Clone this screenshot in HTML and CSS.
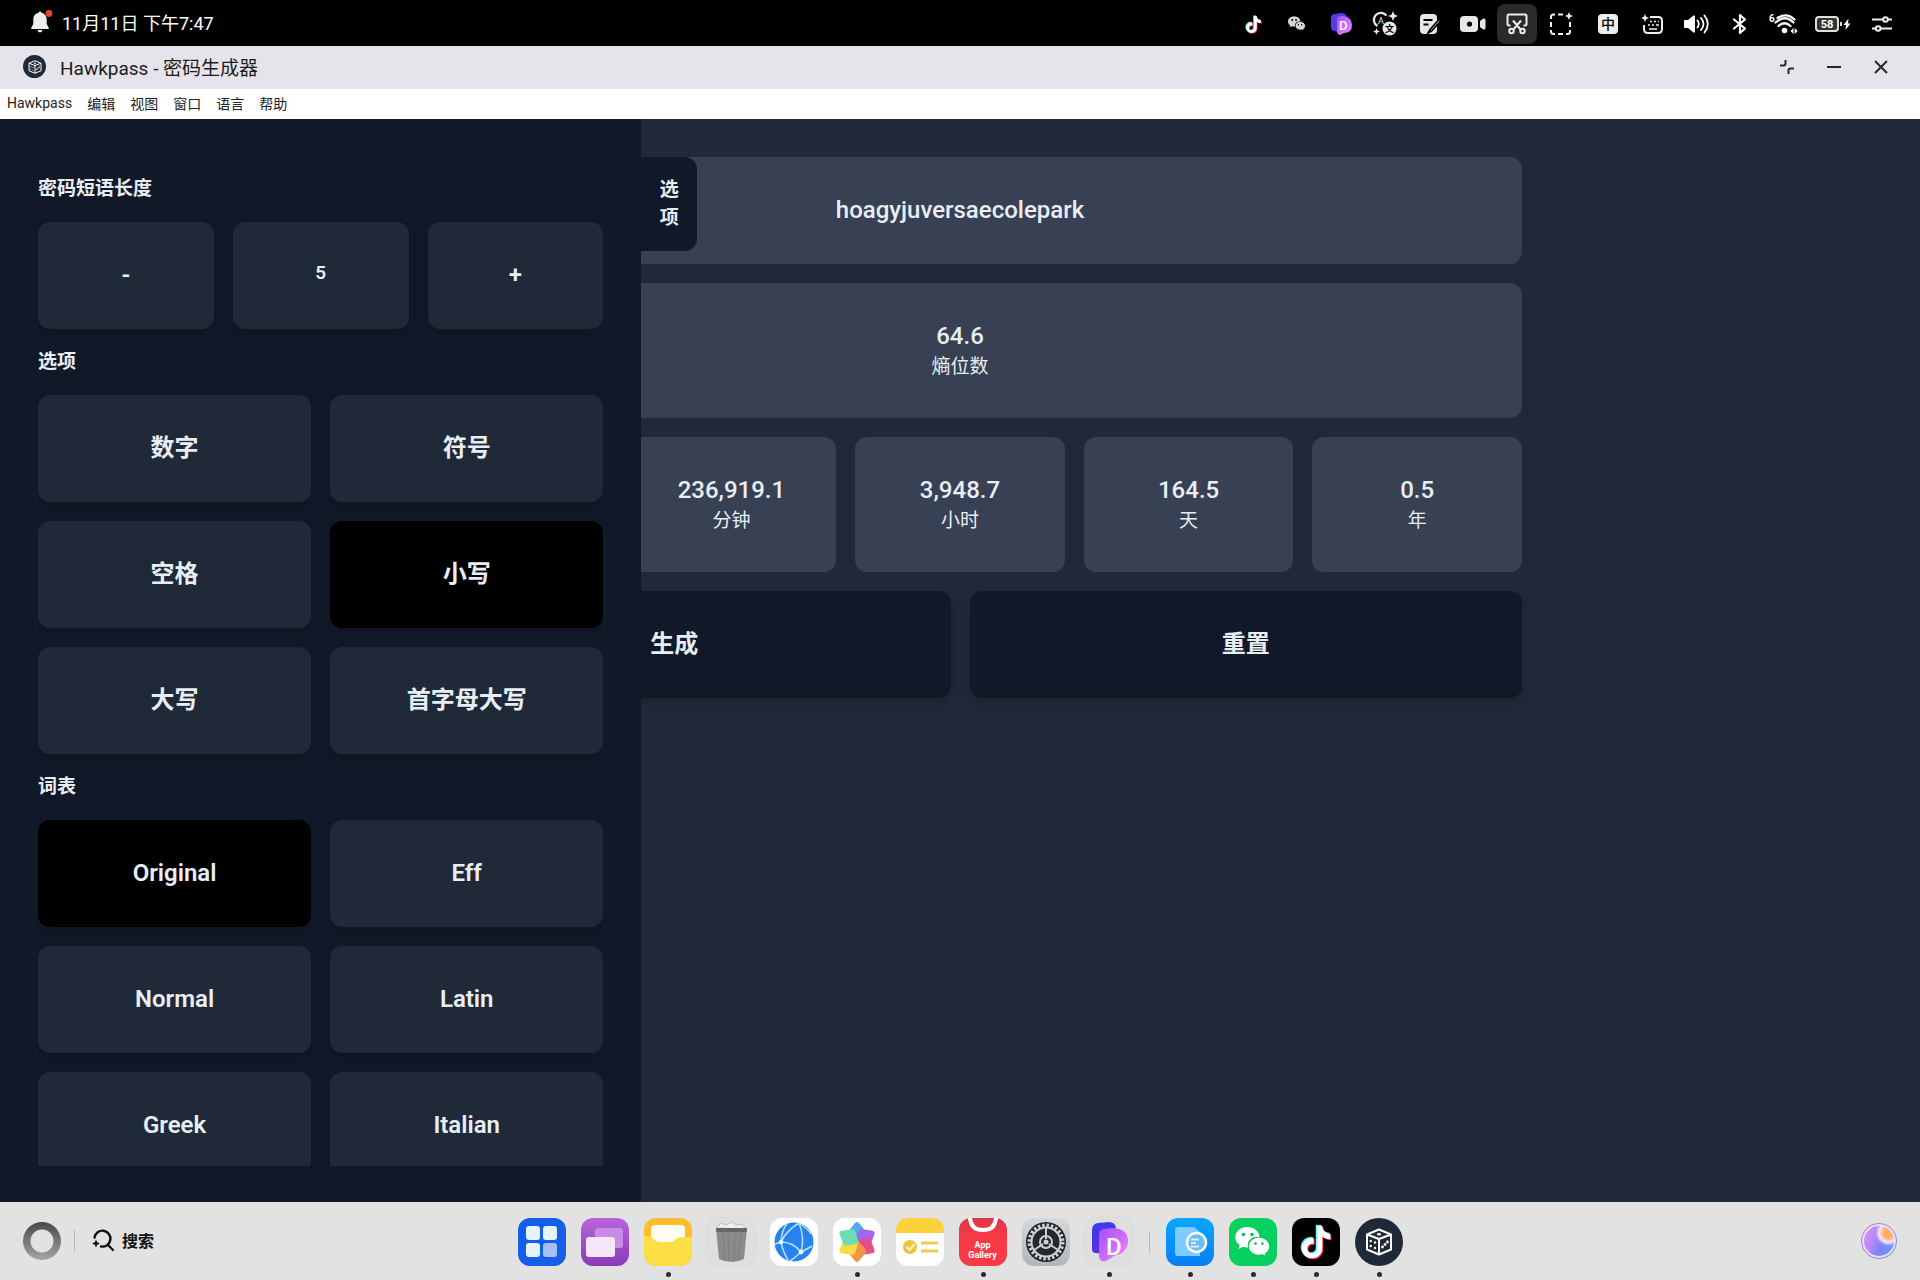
FILE: index.html
```html
<!DOCTYPE html>
<html lang="zh-CN">
<head>
    <meta charset="UTF-8">
    <meta name="viewport" content="width=device-width, initial-scale=1.0">
    <title>Hawkpass - 密码生成器</title>
    <link rel="stylesheet" href="styles.css">
</head>
<body>
    <!-- shared shapes -->
    <svg class="defs" width="0" height="0" aria-hidden="true">
        <symbol id="note" viewBox="0 0 24 24">
            <path d="M12.525.02c1.31-.02 2.61-.01 3.91-.02.08 1.53.63 3.09 1.75 4.17 1.12 1.11 2.7 1.62 4.24 1.79v4.03c-1.44-.05-2.89-.35-4.2-.97-.57-.26-1.1-.59-1.62-.93-.01 2.92.01 5.84-.02 8.75-.08 1.4-.54 2.79-1.35 3.94-1.31 1.92-3.58 3.17-5.91 3.21-1.43.08-2.86-.31-4.08-1.03-2.02-1.19-3.44-3.37-3.65-5.71-.02-.5-.03-1-.01-1.49.18-1.9 1.12-3.72 2.58-4.96 1.66-1.44 3.98-2.13 6.15-1.72.02 1.48-.04 2.96-.04 4.44-.99-.32-2.15-.23-3.02.37-.63.41-1.11 1.04-1.36 1.75-.21.51-.15 1.07-.14 1.61.24 1.64 1.82 3.02 3.5 2.87 1.12-.01 2.19-.66 2.77-1.61.19-.33.4-.67.41-1.06.1-1.79.06-3.57.07-5.36.01-4.03-.01-8.05.02-12.07z"/>
        </symbol>
        <symbol id="dice" viewBox="0 0 28 28">
            <g fill="none" stroke="#fff" stroke-width="2" stroke-linejoin="round">
                <path d="M14 1.500 26 6.500V21.500L14 26.500 2 21.500V6.500Z"/>
                <path d="M2 6.500 14 11l12-4.500M14 11v15.500"/>
            </g>
            <g fill="#fff">
                <ellipse cx="14" cy="6.300" rx="2.200" ry="1.300"/>
                <circle cx="5.700" cy="13" r="1.200"/><circle cx="10" cy="14.500" r="1.200"/>
                <circle cx="5.700" cy="18" r="1.200"/><circle cx="10" cy="20" r="1.200"/>
                <circle cx="22.500" cy="14" r="1.400"/><circle cx="20" cy="16.500" r="1.400"/><circle cx="17.500" cy="19" r="1.400"/>
            </g>
        </symbol>
        <symbol id="chat" viewBox="0 0 36 30">
            <path d="M13 0C5.800 0 0 4.900 0 11c0 3.400 1.900 6.400 4.800 8.400L3.600 23.600l4.800-2.500c1.400.5 3 .8 4.600.8 7.200 0 13-4.900 13-11S20.200 0 13 0Z"/>
        </symbol>
        <symbol id="bubble" viewBox="0 0 24 21">
            <path d="M11 0C5 0 0 4 0 9.200s5 9.300 11 9.300c1.300 0 2.600-.2 3.800-.5l4 2.200-1-3.600c2.600-1.700 4.200-4.400 4.200-7.400C22 4 17 0 11 0Z"/>
        </symbol>
        <symbol id="petal" viewBox="0 0 48 48">
            <path d="M24 26 15.500 17q-1.500-2 0-4L22 5q2-2 4 0l6.500 8q1.500 2 0 4Z"/>
        </symbol>
        <linearGradient id="pinkD" x1="0" y1="0" x2="1" y2="1">
            <stop offset="0" stop-color="#a34dff"/><stop offset="1" stop-color="#f08af5"/>
        </linearGradient>
        <linearGradient id="blueD" x1="0" y1="0" x2="0" y2="1">
            <stop offset="0" stop-color="#3b3bea"/><stop offset="1" stop-color="#5a2fe0"/>
        </linearGradient>
    </svg>

    <header class="statusbar">
        <div class="status-time">
            <svg width="24" height="24" viewBox="0 0 24 24">
                <path d="M11 1.500c.8 0 1.400.5 1.400 1.300 3.300.7 5.300 3.300 5.300 6.700v4.500l2 3.700c.3.700 0 1.300-.7 1.300H3c-.7 0-1-.6-.7-1.300l2-3.700V9.500c0-3.400 2-6 5.300-6.700 0-.8.600-1.300 1.400-1.300ZM8.500 20h5c-.3 1.500-1.300 2.300-2.500 2.300S8.800 21.500 8.500 20Z" fill="#efefef"/>
                <circle cx="20" cy="3.500" r="3.400" fill="#e5432f"/>
            </svg>
            <span>11月11日 下午7:47</span>
        </div>
        <div class="tray">
            <div class="tray-group">
                <span class="tray-item"><svg width="17" height="19" viewBox="0 0 24 26"><use href="#note" width="24" height="24" x="-1" fill="#25f4ee"/><use href="#note" width="24" height="24" x="1" y="2" fill="#fe2c55"/><use href="#note" width="24" height="24" y="1" fill="#fff"/></svg></span>
                <span class="tray-item"><svg width="18" height="16" viewBox="0 0 38 33" fill="#d6d6d6"><use href="#chat" width="36" height="30"/><use href="#bubble" x="15" y="11" width="24" height="21" stroke="#000" stroke-width="2"/><g fill="#000"><circle cx="9" cy="8" r="2"/><circle cx="17" cy="8" r="2"/><circle cx="22" cy="18" r="1.500"/><circle cx="29" cy="18" r="1.500"/></g></svg></span>
                <span class="tray-item"><svg width="24" height="24" viewBox="0 0 24 24"><path d="M2 6q0-4 4-4l6-1q5 0 6 4v15q-5 2-8 0l-5-1q-3-1-3-4Z" fill="#553be8"/><path d="M8 7q0-3 4-3h2q9 1 9 9 0 8-8 8l-4 2q-3-1-3-4Z" fill="url(#pinkD)"/><text x="10" y="18" class="glyph-d" font-size="13">D</text></svg></span>
                <span class="tray-item"><svg width="26" height="26" viewBox="0 0 26 26"><path d="M14.500 4.700A7 7 0 1 0 5.500 15" fill="none" stroke="#e8e8e8" stroke-width="2.200"/><circle cx="17.500" cy="17.500" r="7" fill="#e8e8e8"/><text x="6" y="13" font-size="9" fill="#e8e8e8" class="cjk">A</text><text x="13" y="21" font-size="9" font-weight="700" fill="#000" class="cjk">文</text><path d="M21 0l1.400 3.600L26 5l-3.600 1.400L21 10l-1.400-3.600L16 5l3.600-1.400ZM4.500 17l1 2.500 2.500 1-2.500 1-1 2.500-1-2.500-2.500-1 2.500-1Z" fill="#e8e8e8"/></svg></span>
                <span class="tray-item"><svg width="22" height="22" viewBox="0 0 22 22"><rect x="2" y="1" width="17" height="20" rx="4" fill="#e8e8e8"/><path d="M5.500 7h9M5.500 11.500h5" stroke="#000" stroke-width="2"/><path d="M20.500 7 12 16.500l-2 3.500 3.500-2L22 8.500" fill="#e8e8e8" stroke="#000" stroke-width="1.600"/></svg></span>
                <span class="tray-item"><svg width="26" height="20" viewBox="0 0 26 20"><rect y="2" width="18" height="16" rx="4" fill="#e8e8e8"/><circle cx="9.500" cy="10" r="2.600" fill="#000"/><path d="M20 7l3.500-2.500Q25.500 4 25.500 6v8q0 2-2 1.500L20 13Z" fill="#e8e8e8"/></svg></span>
                <span class="tray-item active"><svg width="22" height="22" viewBox="0 0 22 22" fill="none" stroke="#eee" stroke-width="2"><path d="M4.500 12.500H3q-1.500 0-1.500-1.500V3Q1.500 1.500 3 1.500h16q1.500 0 1.500 1.500v8q0 1.500-1.500 1.500h-1.500M7 7.500l8 9.500M15 7.500 7 17"/><circle cx="5.500" cy="18" r="2.200"/><circle cx="16.500" cy="18" r="2.200"/></svg></span>
                <span class="tray-item"><svg width="24" height="24" viewBox="0 0 24 24"><path d="M2 7V5q0-2.500 2.500-2.500H6M9 2.500h5M2 10v5M2 18v1.500Q2 22 4.500 22H6M9 22h5M17 22h1.500q2.500 0 2.500-2.500V18M21 10v5" fill="none" stroke="#eee" stroke-width="2"/><path d="M20 0l1.200 2.800L24 4l-2.800 1.200L20 8l-1.200-2.800L16 4l2.800-1.200Z" fill="#eee"/></svg></span>
            </div>
            <span class="tray-item"><span class="ime">中</span></span>
            <span class="tray-item"><svg width="24" height="22" viewBox="0 0 24 22"><path d="M10 4h8q4 0 4 4v8q0 4-4 4H8q-4 0-4-4v-4" fill="none" stroke="#eee" stroke-width="2"/><path d="M10 8.500h2m2 0h2m2 0h1M8 12h2m2 0h2m2 0h3M9 16h8" stroke="#eee" stroke-width="1.600"/><path d="M5 1l1.200 2.800L9 5 6.200 6.200 5 9 3.800 6.200 1 5l2.800-1.200Z" fill="#eee"/></svg></span>
            <span class="tray-item"><svg width="26" height="22" viewBox="0 0 26 22"><path d="M1 8q0-1 1-1h3l5.500-4.500Q12 2 12 3.500v15q0 1.500-1.500 1L5 15H2q-1 0-1-1Z" fill="#fff"/><path d="M14.500 7.500q2.500 3.500 0 7M18 5q5 6 0 12M21.500 2.500q6.500 8.500 0 17" fill="none" stroke="#fff" stroke-width="1.800" stroke-linecap="round"/></svg></span>
            <span class="tray-item"><svg width="16" height="22" viewBox="0 0 16 22"><path d="M2 6.500 13 15.500 8 20V2l5 4.500L2 15.500" fill="none" stroke="#fff" stroke-width="2.200" stroke-linejoin="round" stroke-linecap="round"/></svg></span>
            <span class="tray-item"><svg width="30" height="22" viewBox="0 0 30 22"><text x="0" y="9" font-size="10" font-weight="700" fill="#fff" class="cjk">6</text><g fill="none" stroke="#fff" stroke-width="2.200" stroke-linecap="round"><path d="M8.500 5q9-6 17 1.500M6.500 9.500q9.500-8.500 18 0M9.500 13q6-5.500 12 0"/></g><circle cx="15.500" cy="17.500" r="2.800" fill="#fff"/><path d="M24.500 15v6l-3-3ZM25.700 15v6l3-3Z" fill="#fff"/></svg></span>
            <span class="tray-item battery"><svg width="36" height="18" viewBox="0 0 36 18"><rect x="1" y="2" width="22" height="14" rx="3" fill="#333" stroke="#ddd" stroke-width="2"/><text x="12" y="13" font-size="11" font-weight="700" text-anchor="middle" fill="#fff" class="cjk">58</text><path d="M26 7v4" stroke="#ddd" stroke-width="2"/><path d="M33.500 3.500 28.500 10H31l-.5 5L35.500 8.500H33Z" fill="#fff"/></svg></span>
            <span class="tray-item"><svg width="22" height="16" viewBox="0 0 22 16" fill="none" stroke="#eee" stroke-width="2"><path d="M1 3.500h11M17 3.500h4M1 12.500h3.500M10 12.500h11"/><circle cx="14.500" cy="3.500" r="2.300"/><circle cx="7.200" cy="12.500" r="2.300"/></svg></span>
        </div>
    </header>

    <div class="titlebar">
        <span class="app-badge"><svg width="14" height="14"><use href="#dice"/></svg></span>
        <span class="title">Hawkpass - 密码生成器</span>
        <div class="window-controls">
            <button type="button" aria-label="还原"><svg width="16" height="16" viewBox="0 0 16 16"><path d="M1 6.500h3.500Q6.500 6.500 6.500 4.500V1M15 9.500h-3.500q-2 0-2 2V15"/></svg></button>
            <button type="button" aria-label="最小化"><svg width="16" height="16" viewBox="0 0 16 16"><path d="M1 8h14"/></svg></button>
            <button type="button" aria-label="关闭"><svg width="16" height="16" viewBox="0 0 16 16"><path d="M2 2l12 12M14 2 2 14"/></svg></button>
        </div>
    </div>

    <nav class="menubar">
        <button type="button">Hawkpass</button>
        <button type="button">编辑</button>
        <button type="button">视图</button>
        <button type="button">窗口</button>
        <button type="button">语言</button>
        <button type="button">帮助</button>
    </nav>

    <main class="app">
        <div class="results">
            <div class="card password">hoagyjuversaecolepark</div>
            <div class="card"><strong>64.6</strong><span>熵位数</span></div>
            <div class="stats">
                <div class="card"></div>
                <div class="card"><strong>236,919.1</strong><span>分钟</span></div>
                <div class="card"><strong>3,948.7</strong><span>小时</span></div>
                <div class="card"><strong>164.5</strong><span>天</span></div>
                <div class="card"><strong>0.5</strong><span>年</span></div>
            </div>
            <div class="actions">
                <button type="button" class="btn dark">生成</button>
                <button type="button" class="btn dark">重置</button>
            </div>
        </div>

        <aside class="drawer">
            <div class="drawer-scroll">
                <h2>密码短语长度</h2>
                <div class="row three">
                    <button type="button" class="btn">-</button>
                    <div class="length">5</div>
                    <button type="button" class="btn">+</button>
                </div>
                <h2>选项</h2>
                <div class="row">
                    <button type="button" class="btn">数字</button>
                    <button type="button" class="btn">符号</button>
                    <button type="button" class="btn">空格</button>
                    <button type="button" class="btn selected">小写</button>
                    <button type="button" class="btn">大写</button>
                    <button type="button" class="btn">首字母大写</button>
                </div>
                <h2>词表</h2>
                <div class="row">
                    <button type="button" class="btn selected">Original</button>
                    <button type="button" class="btn">Eff</button>
                    <button type="button" class="btn">Normal</button>
                    <button type="button" class="btn">Latin</button>
                    <button type="button" class="btn">Greek</button>
                    <button type="button" class="btn">Italian</button>
                </div>
            </div>
            <button type="button" class="drawer-tab">选项</button>
        </aside>
    </main>

    <footer class="dock">
        <div class="dock-left">
            <button type="button" class="ring" aria-label="助手"></button>
            <span class="divider"></span>
            <button type="button" class="search">
                <svg width="24" height="24" viewBox="0 0 24 24"><path d="M3.500 9.500A8 8 0 1 1 10 18.500M17 17l5 5" fill="none" stroke="#111" stroke-width="2.400" stroke-linecap="round"/><path d="M5 11.500l1.200 2.800L9 15.500l-2.800 1.200L5 19.500l-1.200-2.800L1 15.500l2.800-1.200Z" fill="#111"/></svg>
                搜索
            </button>
        </div>
        <div class="dock-apps">
            <button type="button" class="dock-app launcher" aria-label="启动台"><svg viewBox="0 0 48 48"><g fill="#e4f5fa"><rect x="8" y="8" width="14" height="14" rx="3"/><rect x="25" y="8" width="14" height="14" rx="3"/><rect x="8" y="25" width="14" height="14" rx="3"/><rect x="25" y="25" width="14" height="14" rx="3" fill="#a5c0f8"/></g></svg></button>
            <button type="button" class="dock-app tasks" aria-label="多任务"><svg viewBox="0 0 48 48"><rect x="14" y="10" width="28" height="20" rx="3" fill="#c98be6"/><rect x="5" y="19" width="29" height="20" rx="3" fill="#f6e6fa"/></svg></button>
            <button type="button" class="dock-app files running" aria-label="文件"><svg viewBox="0 0 48 48"><rect x="7" y="7" width="34" height="26" rx="4" fill="#fffdf2"/><path d="M0 18h4q3 0 4 2l3 2q2 2 4 2h12q3 0 5-3 2-2 5-2h11v17q0 12-12 12H12Q0 48 0 36Z" fill="#fbdf45"/></svg></button>
            <button type="button" class="dock-app trash" aria-label="回收站"><svg viewBox="0 0 48 48"><path d="M9 10l5-5 5 2 5-3 6 3 5-1 4 5Z" fill="#eee" stroke="#bbb"/><path d="M9 10h31l-3 31q-12 6-25 0Z" fill="#8b8b8b"/><path d="M9 10h31l-.5 4h-30Z" fill="#666"/><path d="M16 15l2 28M21 15l1 28M28 15l-1 28M34 15l-3 28" stroke="#7d7d7d"/></svg></button>
            <button type="button" class="dock-app white" aria-label="浏览器"><svg viewBox="0 0 48 48"><circle cx="24" cy="24" r="19.500" fill="#2582ee"/><path d="M29 5Q17 12 11 24q12 0 20 10 4-14-2-29ZM11 24l-6 2M11 24q2 10 7 18M31 34q-6 6-11 9M31 34q6-3 11-6M11 24Q12 11 17 6M29 5q9 6 12 11" fill="none" stroke="#b9e4ff" stroke-width="1.500"/><circle cx="11" cy="24" r="2.200" fill="#fff"/><circle cx="31" cy="34" r="2.400" fill="#fff"/></svg></button>
            <button type="button" class="dock-app white running" aria-label="图库"><svg viewBox="0 0 48 48"><g opacity="0.900"><use href="#petal" width="48" height="48" fill="#3f9df0"/><use href="#petal" width="48" height="48" fill="#9a55e8" transform="rotate(60 24 24)"/><use href="#petal" width="48" height="48" fill="#e03c79" transform="rotate(120 24 24)"/><use href="#petal" width="48" height="48" fill="#f08a32" transform="rotate(180 24 24)"/><use href="#petal" width="48" height="48" fill="#f7d92e" transform="rotate(240 24 24)"/><use href="#petal" width="48" height="48" fill="#5fd8b0" transform="rotate(300 24 24)"/></g></svg></button>
            <button type="button" class="dock-app notes" aria-label="备忘录"><svg viewBox="0 0 48 48"><circle cx="14" cy="29" r="7" fill="#ecc33f"/><path d="M10.500 29l3 3 5-6" fill="none" stroke="#fff4c9" stroke-width="2"/><path d="M25 25h17M25 33h17" stroke="#f0cd52" stroke-width="3"/></svg></button>
            <button type="button" class="dock-app gallery running"><svg viewBox="0 0 48 48"><path d="M11 0Q12 12 24 12T37 0" fill="none" stroke="#fff" stroke-width="4"/></svg><span>App<br>Gallery</span></button>
            <button type="button" class="dock-app settings" aria-label="设置"><svg viewBox="0 0 48 48"><circle cx="24" cy="24" r="20" fill="#1d2126"/><circle cx="24" cy="24" r="16.500" fill="none" stroke="#ccd0d3" stroke-width="4" stroke-dasharray="2.500 1.820"/><circle cx="24" cy="24" r="14.500" fill="#24292e" stroke="#ccd0d3" stroke-width="2"/><path d="M24 9v12M12 32l9-6M36 32l-9-6" stroke="#ccd0d3" stroke-width="2"/><circle cx="24" cy="24" r="6" fill="none" stroke="#ccd0d3" stroke-width="2"/><circle cx="24" cy="24" r="2.500" fill="#ccd0d3"/></svg></button>
            <button type="button" class="dock-app plain running" aria-label="D"><svg viewBox="0 0 48 48"><path d="M7 12q0-6 6-7l11-1q6 0 7 6v22q-5 6-12 4l-8-1q-4 0-4-4Z" fill="url(#blueD)"/><path d="M14 16q0-5 6-5l6-1q18 0 17 15-2 11-14 13l-8 5q-7 2-7-6Z" fill="url(#pinkD)"/><text x="21" y="37" class="glyph-d" font-size="24">D</text></svg></button>
            <span class="divider"></span>
            <button type="button" class="dock-app reader running" aria-label="文档"><svg viewBox="0 0 48 48"><path d="M9 12q0-3 3-3h16l6 5v24H12q-3 0-3-3Z" fill="#7ecbff"/><circle cx="30.500" cy="24.500" r="9.500" fill="#6cbcf8" stroke="#fff" stroke-width="2.500"/><path d="M25 21.500h8M25 25h5M25 28.500h8" stroke="#d8f0ff" stroke-width="1.800"/></svg></button>
            <button type="button" class="dock-app wechat running" aria-label="微信"><svg viewBox="0 0 48 48"><use href="#chat" x="6" y="9" width="34" height="28" fill="#fff"/><use href="#bubble" x="19" y="19" width="24" height="21" fill="#fff" stroke="#08c95a" stroke-width="1.500"/><g fill="#08b552"><circle cx="14.500" cy="16.500" r="1.700"/><circle cx="23" cy="16.500" r="1.700"/><circle cx="26.500" cy="25.500" r="1.300"/><circle cx="33.500" cy="25.500" r="1.300"/></g></svg></button>
            <button type="button" class="dock-app tiktok running" aria-label="抖音"><svg viewBox="0 0 48 48"><use href="#note" x="6.500" y="6.500" width="33" height="33" fill="#25f4ee"/><use href="#note" x="8.500" y="8.500" width="33" height="33" fill="#fe2c55"/><use href="#note" x="7.500" y="7.500" width="33" height="33" fill="#fff"/></svg></button>
            <button type="button" class="dock-app hawk running" aria-label="Hawkpass"><svg viewBox="0 0 48 48"><use href="#dice" x="10" y="10" width="28" height="28"/></svg></button>
        </div>
        <div class="dock-right">
            <button type="button" class="orb" aria-label="智慧助手"></button>
        </div>
    </footer>
</body>
</html>
```
FILE: styles.css
```css
* { margin: 0; padding: 0; box-sizing: border-box; }
body {
    font-family: Roboto, "Noto Sans CJK SC", sans-serif;
    height: 100vh;
    display: flex;
    flex-direction: column;
    overflow: hidden;
    background: #1f2937;
    color: #e8eef6;
}
button {
    font: inherit;
    color: inherit;
    background: none;
    border: 0;
    cursor: pointer;
}
svg { display: block; }
.defs { position: absolute; }
.cjk { font-family: Roboto, "Noto Sans CJK SC", sans-serif; }
.glyph-d { font-family: Roboto, sans-serif; font-weight: 500; fill: #fff; }

/* system status bar */
.statusbar {
    flex: none;
    height: 46px;
    display: flex;
    align-items: center;
    justify-content: space-between;
    padding: 0 16px 0 29px;
    background: #000;
    color: #fff;
    font-size: 18px;
}
.status-time {
    display: flex;
    align-items: center;
    gap: 9px;
    padding-bottom: 2px;
}
.tray, .tray-group {
    display: flex;
    align-items: center;
}
.tray-group { margin-right: 3px; }
.tray-item {
    width: 40px;
    height: 40px;
    margin: 2px 2px 0;
    display: flex;
    align-items: center;
    justify-content: center;
    border-radius: 8px;
}
.tray-item.active { background: #2a2a2a; }
.battery { width: 50px; }
.ime {
    width: 20px;
    height: 20px;
    border-radius: 4px;
    background: #eee;
    color: #000;
    font-size: 14px;
    font-weight: 500;
    line-height: 20px;
    text-align: center;
}

/* window title */
.titlebar {
    flex: none;
    height: 43px;
    display: flex;
    align-items: center;
    padding: 0 16px 2px 23px;
    background: #e5e4ea;
    color: #1c1c22;
    font-size: 19px;
}
.app-badge {
    width: 23px;
    height: 23px;
    margin-right: 14px;
    border-radius: 50%;
    background: #1f2937;
    display: flex;
    align-items: center;
    justify-content: center;
}
.window-controls { display: flex; margin-left: auto; }
.window-controls button {
    width: 47px;
    height: 32px;
    display: flex;
    align-items: center;
    justify-content: center;
}
.window-controls path { fill: none; stroke: #26262c; stroke-width: 2; }

.menubar {
    flex: none;
    height: 30px;
    display: flex;
    align-items: center;
    gap: 15px;
    padding: 0 7px 2px;
    background: #fff;
    color: #222;
    font-size: 14px;
}

/* generator */
.app {
    flex: 1;
    min-height: 0;
    position: relative;
    padding: 38px 0;
}
.results {
    max-width: 1124px;
    margin: 0 auto;
    display: flex;
    flex-direction: column;
    gap: 19px;
}
.card {
    padding: 37px 19px;
    border-radius: 12px;
    background: #384053;
    display: flex;
    flex-direction: column;
    align-items: center;
    font-size: 19px;
    line-height: 28px;
}
.card strong, .password {
    font-size: 24px;
    font-weight: 500;
    line-height: 33px;
}
.stats {
    display: grid;
    grid-template-columns: repeat(5, 1fr);
    gap: 19px;
}
.actions {
    display: grid;
    grid-template-columns: 1fr 1fr;
    gap: 19px;
}
.btn, .length {
    padding: 37px 0;
    border-radius: 12px;
    background: #1f2937;
    box-shadow: 0 4px 8px rgba(0, 0, 0, 0.15);
    font-size: 24px;
    font-weight: 600;
    line-height: 33px;
    text-align: center;
}
.length {
    padding-bottom: 42px;
    font-size: 19px;
    line-height: 28px;
}
.btn.dark { background: #111827; }
.btn.selected { background: #000; }

/* options drawer */
.drawer {
    position: absolute;
    top: 0;
    bottom: 0;
    left: 0;
    width: 33.4%;
    padding: 38px 38px 36px;
    background: #111827;
}
.drawer-scroll {
    height: 100%;
    padding-top: 18px;
    overflow-y: auto;
    scrollbar-width: none;
}
.drawer h2 {
    margin-bottom: 19px;
    font-size: 19px;
    font-weight: 600;
    line-height: 28px;
}
.row {
    display: grid;
    grid-template-columns: 1fr 1fr;
    gap: 19px;
    margin-bottom: 19px;
}
.row.three { grid-template-columns: 1fr 1fr 1fr; }
.drawer-tab {
    position: absolute;
    top: 38px;
    left: 100%;
    width: 56px;
    padding: 19px 18px;
    border-radius: 0 12px 12px 0;
    background: #111827;
    font-size: 19px;
    font-weight: 600;
    line-height: 28px;
}

/* dock */
.dock {
    flex: none;
    height: 78px;
    display: grid;
    grid-template-columns: 1fr auto 1fr;
    align-items: center;
    padding: 0 23px;
    background: #e2e2e3;
    color: #111;
}
.dock-left, .dock-right {
    display: flex;
    align-items: center;
}
.dock-right { justify-content: flex-end; }
.ring {
    width: 38px;
    height: 38px;
    border-radius: 50%;
    background: radial-gradient(circle, #e2e2e3 11px, transparent 12px), linear-gradient(#454849, #a5a5a6);
}
.divider {
    width: 1px;
    height: 22px;
    margin: 0 1px;
    background: #bbb;
}
.dock-left .divider { margin: 0 16px 0 13px; }
.search {
    display: flex;
    align-items: center;
    gap: 7px;
    padding-bottom: 2px;
    font-size: 16px;
    font-weight: 600;
}
.dock-apps {
    display: flex;
    align-items: center;
    gap: 15px;
    padding-top: 2px;
}
.dock-app {
    position: relative;
    width: 48px;
    height: 48px;
    border-radius: 12px;
}
.dock-app svg { width: 48px; height: 48px; }
.running::after {
    content: "";
    position: absolute;
    left: 50%;
    bottom: -11px;
    width: 5px;
    height: 5px;
    margin-left: -2px;
    border-radius: 50%;
    background: #2a2a2a;
}
.launcher { background: #155fe8; }
.tasks { background: linear-gradient(#b865dc, #8a3bb8); }
.files { background: #fbbd2c; }
.files svg { border-radius: 12px; }
.trash, .plain { background: #dfdfe0; box-shadow: 0 0 3px rgba(0, 0, 0, 0.08); }
.white { background: #fff; }
.notes { background: linear-gradient(#fcd13a 15px, #fff 15px); }
.gallery { background: linear-gradient(#dc3548, #f83a48 40%); color: #fff; }
.gallery span {
    position: absolute;
    left: 0;
    right: 0;
    top: 22px;
    font-size: 9px;
    font-weight: 700;
    line-height: 10px;
}
.settings { background: linear-gradient(#d6d8d9, #b2b6b9); }
.reader { background: linear-gradient(#08a8ff, #087df5); }
.wechat { background: #07cf60; }
.tiktok { background: #000; }
.hawk { background: #1f2937; border-radius: 50%; }
.orb {
    width: 36px;
    height: 36px;
    border: 1px solid #9a8fe0;
    border-radius: 50%;
    background: radial-gradient(circle at 78% 26%, #ffb066 14%, #f3e6f5 26%, transparent 36%), linear-gradient(110deg, #d88cf5 20%, #7b84f5 60%, #6fa0f8);
    box-shadow: inset 0 0 0 2px #e6e2f4;
}
```
